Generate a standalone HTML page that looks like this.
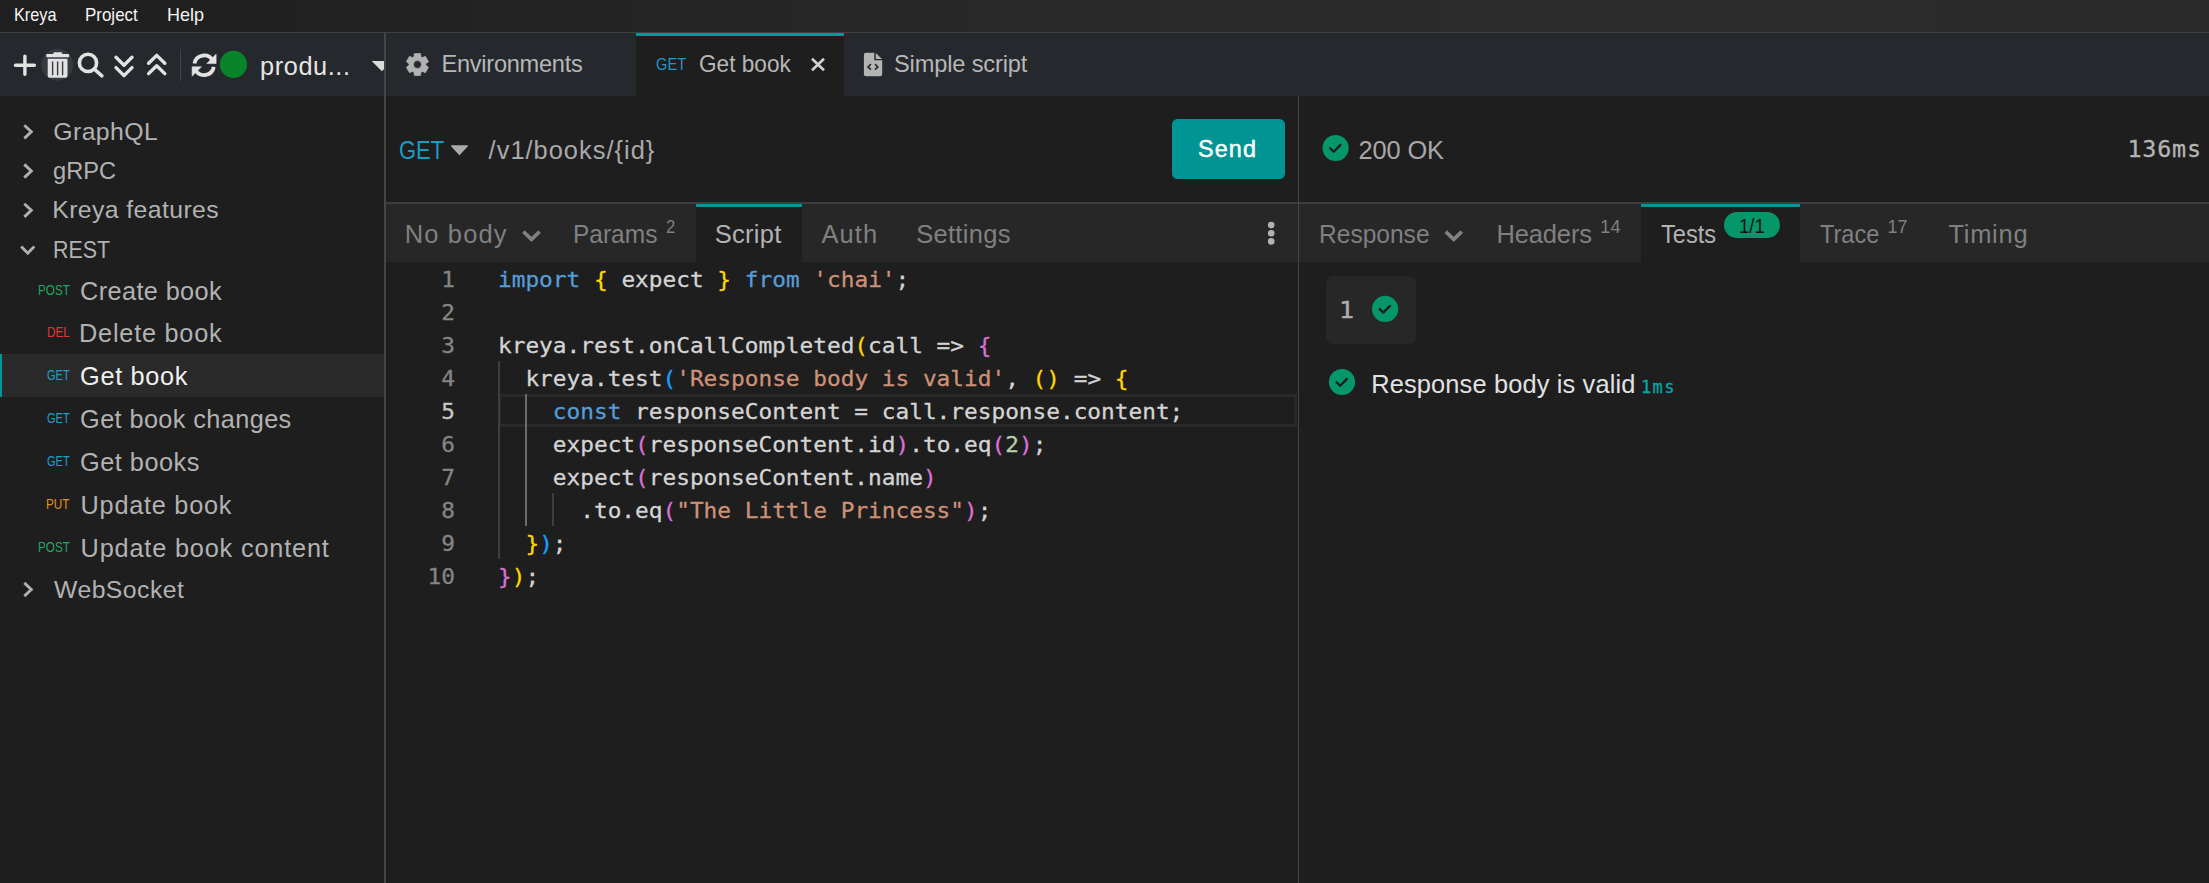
<!DOCTYPE html>
<html lang="en">
<head>
<meta charset="utf-8">
<title>Kreya</title>
<style>
html,body{margin:0;padding:0;}
body{width:2209px;height:883px;overflow:hidden;background:#1e1e1e;position:relative;font-family:"Liberation Sans",sans-serif;}
.b{position:absolute;}
.t{position:absolute;white-space:pre;font-family:"Liberation Sans",sans-serif;}
.t.m{font-family:"DejaVu Sans Mono","Liberation Mono",monospace;}
.t.d{font-family:"DejaVu Sans",sans-serif;}
#menubar{left:0;top:0;width:2209px;height:32px;background:linear-gradient(90deg,#1f1f1f 0%,#212121 15%,#272727 40%,#2b2b2b 60%,#2c2c2c 80%,#2a2a2a 100%);}
#menuline{left:0;top:32px;width:2209px;height:1px;background:#404040;}
#toolbar{left:0;top:33px;width:384px;height:63px;background:#25282c;}
#tabbar{left:386px;top:33px;width:1823px;height:63px;background:#25282c;}
#sbdiv{left:384px;top:33px;width:2px;height:850px;background:#454545;}
#tabact{left:636px;top:33px;width:208px;height:63px;background:#1e1e1e;border-top:3px solid #00999a;box-sizing:border-box;}
#hline{left:386px;top:202px;width:1823px;height:2px;background:#3d3d3d;}
#vline{left:1298px;top:96px;width:1px;height:787px;background:#444;}
.subbar{top:204px;height:58px;background:#272727;}
.subact{top:204px;height:58px;background:#1e1e1e;border-top:3px solid #00999a;box-sizing:border-box;}
#selrow{left:0;top:354px;width:384px;height:43px;background:#2a2a2a;border-left:2px solid #00999a;box-sizing:border-box;}
#send{left:1172px;top:119px;width:113px;height:60px;background:#009594;border-radius:5.5px;}
#badge{left:1724px;top:212px;width:56px;height:26px;border-radius:13px;background:#059669;}
#tbox{left:1326px;top:276px;width:90px;height:68px;border-radius:7px;background:#272727;}
#code{left:386px;top:263px;width:912px;height:340px;-webkit-text-stroke:0.3px;font-family:"DejaVu Sans Mono","Liberation Mono",monospace;font-size:22.78px;line-height:33px;color:#d4d4d4;}
#code .ln{position:absolute;left:0;width:69px;text-align:right;color:#858585;height:33px;transform:scaleY(0.945);transform-origin:0 24px;}
#code .cl{position:absolute;left:112px;white-space:pre;height:33px;transform:scaleY(0.945);transform-origin:0 24px;}
.k{color:#569cd6}.s{color:#ce9178}.y{color:#ffd700}.p{color:#da70d6}.u{color:#179fff}.n{color:#b5cea8}
#curline{left:498px;top:394px;width:799px;height:33px;border:3px solid #292929;box-sizing:border-box;}
.g{position:absolute;width:2px;background:#3e3e3e;}
svg{position:absolute;left:0;top:0;}
</style>
</head>
<body>
<div class="b" id="menubar"></div>
<div class="b" id="menuline"></div>
<div class="b" id="toolbar"></div>
<div class="b" id="tabbar"></div>
<div class="b" id="tabact"></div>
<div class="b" id="sbdiv"></div>
<div class="b" id="selrow"></div>
<div class="b" id="hline"></div>
<div class="b subbar" style="left:386px;width:912px;"></div>
<div class="b subbar" style="left:1299px;width:910px;"></div>
<div class="b subact" style="left:696px;width:106px;"></div>
<div class="b subact" style="left:1641px;width:159px;"></div>
<div class="b" id="vline"></div>
<div class="b" id="send"></div>
<div class="b" id="badge"></div>
<div class="b" id="tbox"></div>
<div class="b" id="curline"></div>
<div class="g" style="left:498px;top:361px;height:198px;"></div>
<div class="g" style="left:525px;top:394px;height:132px;background:#6c6c6c;"></div>
<div class="g" style="left:552px;top:493px;height:33px;"></div>

<div class="b" id="code">
<div class="ln" style="top:0px">1</div><div class="cl" style="top:0px"><span class="k">import</span> <span class="y">{</span> expect <span class="y">}</span> <span class="k">from</span> <span class="s">'chai'</span>;</div>
<div class="ln" style="top:33px">2</div>
<div class="ln" style="top:66px">3</div><div class="cl" style="top:66px">kreya.rest.onCallCompleted<span class="y">(</span>call =&gt; <span class="p">{</span></div>
<div class="ln" style="top:99px">4</div><div class="cl" style="top:99px">  kreya.test<span class="u">(</span><span class="s">'Response body is valid'</span>, <span class="y">()</span> =&gt; <span class="y">{</span></div>
<div class="ln" style="top:132px;color:#c6c6c6">5</div><div class="cl" style="top:132px">    <span class="k">const</span> responseContent = call.response.content;</div>
<div class="ln" style="top:165px">6</div><div class="cl" style="top:165px">    expect<span class="p">(</span>responseContent.id<span class="p">)</span>.to.eq<span class="p">(</span><span class="n">2</span><span class="p">)</span>;</div>
<div class="ln" style="top:198px">7</div><div class="cl" style="top:198px">    expect<span class="p">(</span>responseContent.name<span class="p">)</span></div>
<div class="ln" style="top:231px">8</div><div class="cl" style="top:231px">      .to.eq<span class="p">(</span><span class="s">"The Little Princess"</span><span class="p">)</span>;</div>
<div class="ln" style="top:264px">9</div><div class="cl" style="top:264px">  <span class="y">}</span><span class="u">)</span>;</div>
<div class="ln" style="top:297px">10</div><div class="cl" style="top:297px"><span class="p">}</span><span class="y">)</span>;</div>
</div>

<svg width="2209" height="883" viewBox="0 0 2209 883">
<path d="M15.5 65.2H34.4M24.9 56.1V74.3" stroke="#e2e2e2" stroke-width="3.4" stroke-linecap="round" fill="none"/>
<circle cx="57.2" cy="64.8" r="16" fill="#353a3f"/>
<rect x="53.4" y="52.2" width="8.8" height="3" rx="0.9" fill="#e2e2e2"/>
<rect x="46.2" y="54" width="23" height="3.2" rx="0.9" fill="#e2e2e2"/>
<path d="M47.7 58.7H67.5V75.8a2 2 0 0 1 -2 2H49.7a2 2 0 0 1 -2 -2Z" fill="#e2e2e2"/>
<path d="M52.6 62V74.8M57.6 62V74.8M62.6 62V74.8" stroke="#353a3f" stroke-width="1.4" stroke-linecap="round" fill="none"/>
<circle cx="88" cy="62.9" r="8.6" stroke="#e2e2e2" stroke-width="3.6" fill="none"/>
<path d="M94.4 69.3L101.9 75.9" stroke="#e2e2e2" stroke-width="3.5" stroke-linecap="round" fill="none"/>
<path d="M116 57.2L124 65.2L132 57.2M116 67.6L124 75.6L132 67.6" stroke="#e2e2e2" stroke-width="3.4" stroke-linecap="round" stroke-linejoin="round" fill="none"/>
<path d="M148.6 63.2L156.7 55.4L164.8 63.2M148.6 73.6L156.7 65.8L164.8 73.6" stroke="#e2e2e2" stroke-width="3.4" stroke-linecap="round" stroke-linejoin="round" fill="none"/>
<rect x="180" y="49" width="1" height="32" fill="#40444a"/>
<path d="M194.45 63.5A9.8 9.8 0 0 1 212.6 60.3" stroke="#e2e2e2" stroke-width="3.8" fill="none"/>
<path d="M216.1 54.2V63.6H206.8Z" fill="#e2e2e2" stroke="#e2e2e2" stroke-width="0.6" stroke-linejoin="round"/>
<path d="M213.75 66.9A9.8 9.8 0 0 1 195.6 70.1" stroke="#e2e2e2" stroke-width="3.8" fill="none"/>
<path d="M192.1 76.2V66.8H201.4Z" fill="#e2e2e2" stroke="#e2e2e2" stroke-width="0.6" stroke-linejoin="round"/>
<circle cx="233.45" cy="64.4" r="13.6" fill="#08842a"/>
<path d="M371.7 61H384V69.2L381.9 71.2Z" fill="#dcdcdc"/>
<path d="M413.87 56.90 L414.41 53.51 L420.49 53.51 L421.03 56.90 L422.24 57.60 L425.44 56.37 L428.49 61.64 L425.82 63.80 L425.82 65.20 L428.49 67.36 L425.44 72.63 L422.24 71.40 L421.03 72.10 L420.49 75.49 L414.41 75.49 L413.87 72.10 L412.66 71.40 L409.46 72.63 L406.41 67.36 L409.08 65.20 L409.08 63.80 L406.41 61.64 L409.46 56.37 L412.66 57.60Z M421.40 64.50 A3.95 3.95 0 1 0 413.50 64.50 A3.95 3.95 0 1 0 421.40 64.50Z" fill="#b2b2b2" fill-rule="evenodd" stroke="#b2b2b2" stroke-width="0.7" stroke-linejoin="round"/>
<path d="M812 58.7L824 70.2M824 58.7L812 70.2" stroke="#d2d2d2" stroke-width="2.6" fill="none"/>
<path d="M865.9 52.8H874.3V60.2H882.2V74.2a2 2 0 0 1 -2 2H865.9a2 2 0 0 1 -2 -2V54.8a2 2 0 0 1 2 -2Z" fill="#b4b4b4"/>
<path d="M875.8 53L882 59.1H875.8Z" fill="#b4b4b4"/>
<path d="M870.9 64.2L868 66.9L870.9 69.6M875 64.2L877.9 66.9L875 69.6" stroke="#25282c" stroke-width="1.6" fill="none"/>
<path d="M451.6 145.9H467.3L459.45 154.4Z" fill="#ababab" stroke="#ababab" stroke-width="1.4" stroke-linejoin="round"/>
<path d="M24.3 125.20L31.3 131.80L24.3 138.40" stroke="#b0b0b0" stroke-width="2.9" fill="none"/>
<path d="M24.3 164.40L31.3 171.00L24.3 177.60" stroke="#b0b0b0" stroke-width="2.9" fill="none"/>
<path d="M24.3 203.70L31.3 210.30L24.3 216.90" stroke="#b0b0b0" stroke-width="2.9" fill="none"/>
<path d="M24.3 582.90L31.3 589.50L24.3 596.10" stroke="#b0b0b0" stroke-width="2.9" fill="none"/>
<path d="M21.2 246.4L27.75 253.2L34.3 246.4" stroke="#b0b0b0" stroke-width="2.9" fill="none"/>
<path d="M523.4 231.6L531.5 239.4L539.6 231.6" stroke="#808080" stroke-width="3.6" fill="none"/>
<path d="M1445.7 231.6L1453.75 239.4L1461.8 231.6" stroke="#808080" stroke-width="3.6" fill="none"/>
<circle cx="1271.2" cy="225.1" r="3.3" fill="#b2b2b2"/>
<circle cx="1271.2" cy="233.25" r="3.3" fill="#b2b2b2"/>
<circle cx="1271.2" cy="241.4" r="3.3" fill="#b2b2b2"/>
<circle cx="1335.6" cy="148.0" r="13.1" fill="#059669"/>
<path d="M1330.20 148.20L1333.75 151.70L1340.50 144.90" stroke="#1e1e1e" stroke-width="2.3" stroke-linecap="round" stroke-linejoin="round" fill="none"/>
<circle cx="1385.1" cy="308.95" r="13.1" fill="#059669"/>
<path d="M1379.70 309.15L1383.25 312.65L1390.00 305.85" stroke="#1e1e1e" stroke-width="2.3" stroke-linecap="round" stroke-linejoin="round" fill="none"/>
<circle cx="1342.0" cy="382.0" r="13.1" fill="#059669"/>
<path d="M1336.60 382.20L1340.15 385.70L1346.90 378.90" stroke="#1e1e1e" stroke-width="2.3" stroke-linecap="round" stroke-linejoin="round" fill="none"/>
</svg>

<div class="t" style="left:13.64px;top:2.00px;font-size:19px;line-height:25px;color:#f4f4f4;transform:scaleX(0.8560);transform-origin:0 0;">Kreya</div>
<div class="t" style="left:84.61px;top:2.00px;font-size:19px;line-height:25px;color:#f4f4f4;transform:scaleX(0.8920);transform-origin:0 0;">Project</div>
<div class="t" style="left:166.55px;top:2.00px;font-size:19px;line-height:25px;color:#f4f4f4;transform:scaleX(0.9464);transform-origin:0 0;">Help</div>
<div class="t" style="left:260.00px;top:50.00px;font-size:25.3px;line-height:33px;color:#e6e6e6;letter-spacing:0.606px;">produ...</div>
<div class="t" style="left:53.25px;top:116.00px;font-size:24.8px;line-height:32px;color:#b2b2b2;letter-spacing:0.424px;">GraphQL</div>
<div class="t" style="left:53.30px;top:155.00px;font-size:24.8px;line-height:32px;color:#b2b2b2;transform:scaleX(0.9535);transform-origin:0 0;">gRPC</div>
<div class="t" style="left:52.25px;top:194.00px;font-size:24.8px;line-height:32px;color:#b2b2b2;letter-spacing:0.395px;">Kreya features</div>
<div class="t" style="left:52.52px;top:234.00px;font-size:24.8px;line-height:32px;color:#b2b2b2;transform:scaleX(0.8635);transform-origin:0 0;">REST</div>
<div class="t" style="left:54.00px;top:574.00px;font-size:24.8px;line-height:32px;color:#b2b2b2;letter-spacing:0.443px;">WebSocket</div>
<div class="t" style="left:37.72px;top:280.00px;font-size:15px;line-height:20px;color:#22a565;transform:scaleX(0.7813);transform-origin:0 0;">POST</div>
<div class="t" style="left:80.10px;top:275.00px;font-size:25.3px;line-height:33px;color:#b2b2b2;letter-spacing:0.374px;">Create book</div>
<div class="t" style="left:46.92px;top:322.00px;font-size:15px;line-height:20px;color:#e03636;transform:scaleX(0.7831);transform-origin:0 0;">DEL</div>
<div class="t" style="left:79.10px;top:317.00px;font-size:25.3px;line-height:33px;color:#b2b2b2;letter-spacing:0.754px;">Delete book</div>
<div class="t" style="left:46.90px;top:365.00px;font-size:15px;line-height:20px;color:#1f9ecc;transform:scaleX(0.7368);transform-origin:0 0;">GET</div>
<div class="t" style="left:80.10px;top:360.00px;font-size:25.3px;line-height:33px;color:#f0f0f0;letter-spacing:0.670px;">Get book</div>
<div class="t" style="left:46.90px;top:408.00px;font-size:15px;line-height:20px;color:#1f9ecc;transform:scaleX(0.7368);transform-origin:0 0;">GET</div>
<div class="t" style="left:80.10px;top:403.00px;font-size:25.3px;line-height:33px;color:#b2b2b2;letter-spacing:0.388px;">Get book changes</div>
<div class="t" style="left:46.90px;top:451.00px;font-size:15px;line-height:20px;color:#1f9ecc;transform:scaleX(0.7368);transform-origin:0 0;">GET</div>
<div class="t" style="left:80.10px;top:446.00px;font-size:25.3px;line-height:33px;color:#b2b2b2;letter-spacing:0.493px;">Get books</div>
<div class="t" style="left:46.12px;top:494.00px;font-size:15px;line-height:20px;color:#e0901f;transform:scaleX(0.7837);transform-origin:0 0;">PUT</div>
<div class="t" style="left:80.60px;top:489.00px;font-size:25.3px;line-height:33px;color:#b2b2b2;letter-spacing:0.739px;">Update book</div>
<div class="t" style="left:37.72px;top:537.00px;font-size:15px;line-height:20px;color:#22a565;transform:scaleX(0.7813);transform-origin:0 0;">POST</div>
<div class="t" style="left:80.60px;top:532.00px;font-size:25.3px;line-height:33px;color:#b2b2b2;letter-spacing:0.820px;">Update book content</div>
<div class="t" style="left:441.50px;top:49.00px;font-size:23.6px;line-height:31px;color:#b7b7b7;letter-spacing:-0.268px;">Environments</div>
<div class="t" style="left:655.75px;top:54.00px;font-size:17px;line-height:22px;color:#2398c8;transform:scaleX(0.8608);transform-origin:0 0;">GET</div>
<div class="t" style="left:699.04px;top:49.00px;font-size:23.6px;line-height:31px;color:#b7b7b7;transform:scaleX(0.9584);transform-origin:0 0;">Get book</div>
<div class="t" style="left:894.00px;top:49.00px;font-size:23.6px;line-height:31px;color:#b7b7b7;letter-spacing:-0.145px;">Simple script</div>
<div class="t" style="left:399.34px;top:134.00px;font-size:25.4px;line-height:33px;color:#1b9ac4;transform:scaleX(0.8642);transform-origin:0 0;">GET</div>
<div class="t" style="left:488.60px;top:134.00px;font-size:25.4px;line-height:33px;color:#a9a9a9;letter-spacing:1.017px;">/v1/books/{id}</div>
<div class="t" style="left:1198.00px;top:134.00px;font-size:23.4px;line-height:30px;color:#ffffff;letter-spacing:1.094px;-webkit-text-stroke:0.45px #ffffff;">Send</div>
<div class="t" style="left:1358.60px;top:134.00px;font-size:25.4px;line-height:33px;color:#a8a8a8;letter-spacing:-0.153px;">200 OK</div>
<div class="t m" style="left:2127.40px;top:134.00px;font-size:23.4px;line-height:30px;color:#b4b4b4;letter-spacing:0.818px;-webkit-text-stroke:0.3px;">136ms</div>
<div class="t" style="left:404.80px;top:218.00px;font-size:25.5px;line-height:33px;color:#808080;letter-spacing:1.120px;">No body</div>
<div class="t" style="left:573.08px;top:218.00px;font-size:25.5px;line-height:33px;color:#808080;transform:scaleX(0.9606);transform-origin:0 0;">Params</div>
<div class="t" style="left:665.75px;top:216.00px;font-size:18px;line-height:23px;color:#808080;transform:scaleX(0.9250);transform-origin:0 0;">2</div>
<div class="t" style="left:714.75px;top:218.00px;font-size:25.5px;line-height:33px;color:#b2b2b2;letter-spacing:0.281px;">Script</div>
<div class="t" style="left:821.50px;top:218.00px;font-size:25.5px;line-height:33px;color:#808080;letter-spacing:1.075px;">Auth</div>
<div class="t" style="left:916.20px;top:218.00px;font-size:25.5px;line-height:33px;color:#808080;letter-spacing:0.302px;">Settings</div>
<div class="t" style="left:1318.87px;top:218.00px;font-size:25.5px;line-height:33px;color:#808080;transform:scaleX(0.9628);transform-origin:0 0;">Response</div>
<div class="t" style="left:1496.40px;top:218.00px;font-size:25.5px;line-height:33px;color:#808080;letter-spacing:-0.131px;">Headers</div>
<div class="t" style="left:1600.25px;top:216.00px;font-size:18px;line-height:23px;color:#808080;letter-spacing:0.239px;">14</div>
<div class="t" style="left:1661.25px;top:218.00px;font-size:25.5px;line-height:33px;color:#b2b2b2;transform:scaleX(0.9274);transform-origin:0 0;">Tests</div>
<div class="t" style="left:1738.65px;top:214.00px;font-size:19.6px;line-height:25px;color:#121212;transform:scaleX(0.9471);transform-origin:0 0;">1/1</div>
<div class="t" style="left:1819.50px;top:218.00px;font-size:25.5px;line-height:33px;color:#808080;transform:scaleX(0.9242);transform-origin:0 0;">Trace</div>
<div class="t" style="left:1887.40px;top:216.00px;font-size:18px;line-height:23px;color:#808080;letter-spacing:0.189px;">17</div>
<div class="t" style="left:1948.40px;top:218.00px;font-size:25.5px;line-height:33px;color:#808080;letter-spacing:0.723px;">Timing</div>
<div class="t m" style="left:1338.52px;top:296.00px;font-size:22.5px;line-height:29px;color:#adadad;transform:scaleX(1.1136);transform-origin:0 0;-webkit-text-stroke:0.4px;">1</div>
<div class="t" style="left:1371.20px;top:368.00px;font-size:25.4px;line-height:33px;color:#e2e2e2;letter-spacing:0.146px;">Response body is valid</div>
<div class="t m" style="left:1641.00px;top:376.00px;font-size:17px;line-height:22px;color:#0aa5a5;letter-spacing:1.390px;-webkit-text-stroke:0.3px;">1ms</div>
</body>
</html>
